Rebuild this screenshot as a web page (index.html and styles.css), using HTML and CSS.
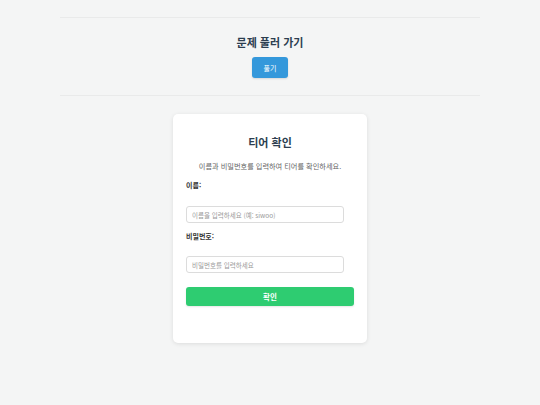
FILE: index.html
```html
<!DOCTYPE html>
<html lang="ko">
<head>
<meta charset="utf-8">
<link rel="stylesheet" href="styles.css">
</head>
<body>
<section class="solve">
  <h2 class="solve-title">문제 풀러 가기</h2>
  <button class="btn-blue">풀기</button>
</section>
<div class="card">
  <h2 class="card-title">티어 확인</h2>
  <p class="desc">이름과 비밀번호를 입력하여 티어를 확인하세요.</p>
  <label class="label">이름:</label>
  <input class="input input-first" type="text" placeholder="이름을 입력하세요 (예: siwoo)">
  <label class="label label-pw">비밀번호:</label>
  <input class="input input-pw" type="password" placeholder="비밀번호를 입력하세요">
  <button class="btn-green">확인</button>
</div>
</body>
</html>
```
FILE: styles.css
```css
* { box-sizing: border-box; }
html, body { margin: 0; padding: 0; }
body {
  background: #f4f5f5;
  font-family: "Noto Sans CJK KR", "Noto Sans", sans-serif;
  color: #2c3e50;
  width: 540px;
  height: 405px;
  overflow: hidden;
}
.solve {
  width: 420px;
  margin: 17px auto 0;
  border-top: 1px solid #e9eaea;
  border-bottom: 1px solid #e9eaea;
  padding: 17px 0 17px;
  display: flex;
  flex-direction: column;
  align-items: center;
}
.solve-title {
  margin: 0;
  font-size: 11px;
  line-height: 14px;
  font-weight: 700;
  color: #2c3e50;
}
.btn-blue {
  margin-top: 8px;
  width: 36px;
  height: 21px;
  border: none;
  border-radius: 3px;
  background: #3498db;
  color: #fff;
  font-family: inherit;
  font-size: 7px;
  padding: 0;
  box-shadow: 0 1px 2px rgba(0,0,0,0.12);
}
.card {
  width: 194px;
  margin: 18px auto 0;
  background: #fff;
  border-radius: 5px;
  box-shadow: 0 1px 4px rgba(0,0,0,0.1);
  padding: 21px 13px 37px;
  display: flex;
  flex-direction: column;
}
.card-title {
  margin: 0;
  text-align: center;
  font-size: 11px;
  line-height: 14px;
  font-weight: 700;
  color: #2c3e50;
}
.desc {
  margin: 12px 0 0;
  text-align: center;
  font-size: 7.2px;
  line-height: 10px;
  color: #666;
}
.label {
  margin-top: 9px;
  font-size: 7px;
  line-height: 10px;
  font-weight: 700;
  color: #333;
}
.label-pw { margin-top: 8px; }
.input {
  width: 158px;
  height: 17px;
  border: 1px solid #dcdcdc;
  border-radius: 3px;
  padding: 0 5px;
  font-family: inherit;
  font-size: 6.5px;
  color: #333;
  background: #fff;
  outline: none;
}
.input::placeholder { color: #999; }
.input-first { margin-top: 16px; }
.input-pw { margin-top: 15px; }
.btn-green {
  margin-top: 14px;
  width: 168px;
  height: 19px;
  border: none;
  border-radius: 3px;
  background: #2ecc71;
  color: #fff;
  font-family: inherit;
  font-size: 7.5px;
  font-weight: 700;
  padding: 0;
  box-shadow: 0 1px 2px rgba(0,0,0,0.1);
}
```
